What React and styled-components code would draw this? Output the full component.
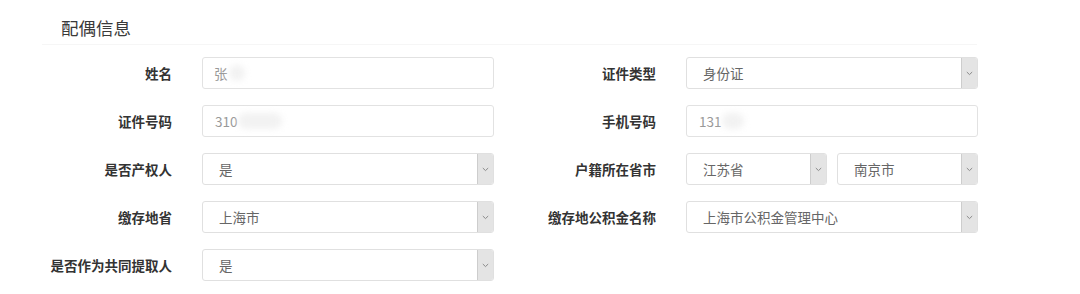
import React from "react";
import styled, { createGlobalStyle } from "styled-components";

const Global = createGlobalStyle`
  html, body { margin: 0; padding: 0; background: #fff; }
  body { font-family: "Noto Sans CJK SC", "Noto Sans", sans-serif; }
  * { box-sizing: border-box; }
`;

const Page = styled.div`
  width: 1080px;
  height: 294px;
  padding-left: 42px;
  background: #fff;
`;

const Section = styled.section`
  width: 935px;
`;

const Header = styled.div`
  padding: 16px 0 4px 19px;
  border-bottom: 1px solid #f6f6f6;
`;

const Title = styled.h3`
  margin: 0;
  font-size: 17.5px;
  line-height: 24px;
  font-weight: 400;
  color: #3a3a3a;
`;

const Form = styled.div`
  display: grid;
  grid-template-columns: 452px 452px;
  column-gap: 32px;
  row-gap: 16px;
  margin-top: 12px;
`;

const Row = styled.div`
  display: grid;
  grid-template-columns: 130px 292px;
  column-gap: 30px;
  align-items: center;
  height: 32px;
`;

const Label = styled.label`
  text-align: right;
  font-size: 13.5px;
  font-weight: 700;
  color: #333;
  white-space: nowrap;
  line-height: 32px;
`;

const Field = styled.div`
  height: 32px;
  border: 1px solid #e2e2e2;
  border-radius: 3px;
  padding-left: ${(p) => p.$pad || 11}px;
  display: flex;
  align-items: center;
  font-size: 13.5px;
  color: #999;
  background: #fff;
`;

const Blur = styled.span`
  display: inline-block;
  width: ${(p) => p.$w}px;
  height: 16px;
  margin-left: 1px;
  background: #f2f2f2;
  border-radius: 8px;
  filter: blur(3px);
`;

const SelectBox = styled.div`
  height: 32px;
  flex: 1;
  display: flex;
  align-items: stretch;
  border: 1px solid #e0e0e0;
  border-radius: 3px;
  background: #fff;
  overflow: hidden;
`;

const SelectValue = styled.div`
  flex: 1;
  display: flex;
  align-items: center;
  padding-left: 16px;
  font-size: 13.5px;
  color: #666;
`;

const Arrow = styled.div`
  width: 16px;
  display: flex;
  align-items: center;
  justify-content: center;
  background: #e4e4e4;
  border-left: 1px solid #cdcdcd;
`;

const Pair = styled.div`
  display: flex;
  gap: 10px;
`;

const Chevron = () => (
  <svg width="7" height="5" viewBox="0 0 7 5">
    <path d="M0.8 1 L3.5 3.6 L6.2 1" fill="none" stroke="#8a8a8a" strokeWidth="1" />
  </svg>
);

const Select = ({ value }) => (
  <SelectBox>
    <SelectValue>{value}</SelectValue>
    <Arrow>
      <Chevron />
    </Arrow>
  </SelectBox>
);

export default function App() {
  return (
    <Page>
      <Global />
      <Section>
        <Header>
          <Title>配偶信息</Title>
        </Header>
        <Form>
          <Row>
            <Label>姓名</Label>
            <Field>
              张<Blur $w={16} />
            </Field>
          </Row>
          <Row>
            <Label>证件类型</Label>
            <Select value="身份证" />
          </Row>
          <Row>
            <Label>证件号码</Label>
            <Field $pad={12}>
              310<Blur $w={44} />
            </Field>
          </Row>
          <Row>
            <Label>手机号码</Label>
            <Field $pad={12}>
              131<Blur $w={22} />
            </Field>
          </Row>
          <Row>
            <Label>是否产权人</Label>
            <Select value="是" />
          </Row>
          <Row>
            <Label>户籍所在省市</Label>
            <Pair>
              <Select value="江苏省" />
              <Select value="南京市" />
            </Pair>
          </Row>
          <Row>
            <Label>缴存地省</Label>
            <Select value="上海市" />
          </Row>
          <Row>
            <Label>缴存地公积金名称</Label>
            <Select value="上海市公积金管理中心" />
          </Row>
          <Row>
            <Label>是否作为共同提取人</Label>
            <Select value="是" />
          </Row>
        </Form>
      </Section>
    </Page>
  );
}
